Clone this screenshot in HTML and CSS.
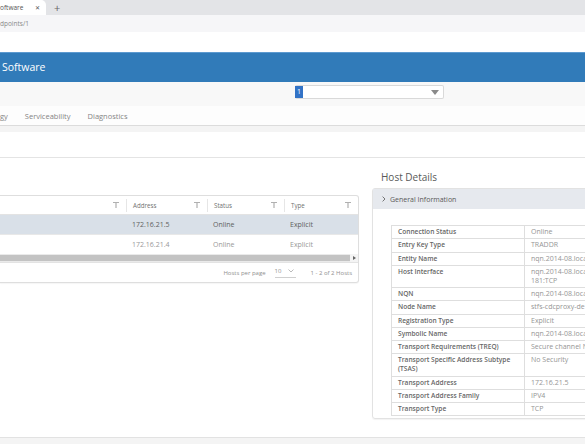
FILE: index.html
```html
<!DOCTYPE html>
<html lang="en">
<head>
    <meta charset="UTF-8">
    <title>Hosts</title>
    <link rel="stylesheet" href="styles.css">
</head>
<body>
    <!-- Browser chrome -->
    <div class="tab-strip">
        <div class="tab active">
            <span class="tab-title">oftware</span>
            <span class="tab-close">✕</span>
        </div>
        <span class="tab-new">+</span>
    </div>
    <div class="address-bar">dpoints/1</div>
    <div class="page-gap"></div>

    <!-- App header -->
    <div class="app-header">Software</div>
    <div class="sub-bar">
        <div class="select-box">
            <span class="select-value">1</span>
            <svg class="select-caret" width="8" height="5" viewBox="0 0 8 5"><path d="M0 0H8L4 5Z" fill="#8a8a8a"/></svg>
        </div>
    </div>
    <div class="nav-tabs">
        <span class="nav-tab">gy</span>
        <span class="nav-tab">Serviceability</span>
        <span class="nav-tab">Diagnostics</span>
    </div>
    <div class="nav-shadow"></div>
    <div class="page-title-row"></div>

    <!-- Main content -->
    <div class="content">
        <div class="left-col">
            <div class="datagrid">
                <div class="dg-row dg-head">
                    <div class="dg-cell c1"><svg class="filter" width="6" height="6" viewBox="0 0 6 6"><path d="M0 0H6V1H3.6V6H2.4V1H0Z" fill="#b0b0b0"/></svg></div>
                    <div class="dg-cell c2">Address<svg class="filter" width="6" height="6" viewBox="0 0 6 6"><path d="M0 0H6V1H3.6V6H2.4V1H0Z" fill="#b0b0b0"/></svg></div>
                    <div class="dg-cell c3">Status<svg class="filter" width="6" height="6" viewBox="0 0 6 6"><path d="M0 0H6V1H3.6V6H2.4V1H0Z" fill="#b0b0b0"/></svg></div>
                    <div class="dg-cell c4">Type<svg class="filter" width="6" height="6" viewBox="0 0 6 6"><path d="M0 0H6V1H3.6V6H2.4V1H0Z" fill="#b0b0b0"/></svg></div>
                </div>
                <div class="dg-row dg-selected">
                    <div class="dg-cell c1"></div>
                    <div class="dg-cell c2">172.16.21.5</div>
                    <div class="dg-cell c3">Online</div>
                    <div class="dg-cell c4">Explicit</div>
                </div>
                <div class="dg-row dg-plain">
                    <div class="dg-cell c1"></div>
                    <div class="dg-cell c2">172.16.21.4</div>
                    <div class="dg-cell c3">Online</div>
                    <div class="dg-cell c4">Explicit</div>
                </div>
                <div class="dg-scroll">
                    <div class="scroll-track"></div>
                    <div class="scroll-arrow"><svg width="3" height="4" viewBox="0 0 3 4"><path d="M0 0L3 2L0 4Z" fill="#666"/></svg></div>
                </div>
                <div class="dg-footer">
                    <span class="per-page">Hosts per page</span>
                    <span class="page-size">10<svg width="6" height="4" viewBox="0 0 6 4"><path d="M0.5 0.5L3 3L5.5 0.5" stroke="#aaa" fill="none" stroke-width="0.8"/></svg></span>
                    <span class="page-range">1 - 2 of 2 Hosts</span>
                </div>
            </div>
        </div>

        <div class="right-col">
            <h2 class="details-title">Host Details</h2>
            <div class="panel">
                <div class="panel-header">
                    <svg class="chevron" width="4" height="6" viewBox="0 0 4 6"><path d="M0.6 0.6L3 3L0.6 5.4" stroke="#666" fill="none" stroke-width="0.9"/></svg>
                    <span>General Information</span>
                </div>
                <div class="panel-body">
                    <table class="details">
                        <tr><th>Connection Status</th><td>Online</td></tr>
                        <tr><th>Entry Key Type</th><td>TRADDR</td></tr>
                        <tr><th>Entity Name</th><td>nqn.2014-08.loca</td></tr>
                        <tr><th>Host Interface</th><td>nqn.2014-08.loca<br>181:TCP</td></tr>
                        <tr><th>NQN</th><td>nqn.2014-08.loca</td></tr>
                        <tr><th>Node Name</th><td>stfs-cdcproxy-de</td></tr>
                        <tr><th>Registration Type</th><td>Explicit</td></tr>
                        <tr><th>Symbolic Name</th><td>nqn.2014-08.loca</td></tr>
                        <tr><th>Transport Requirements (TREQ)</th><td>Secure channel N</td></tr>
                        <tr><th>Transport Specific Address Subtype<br>(TSAS)</th><td>No Security</td></tr>
                        <tr><th>Transport Address</th><td>172.16.21.5</td></tr>
                        <tr><th>Transport Address Family</th><td>IPV4</td></tr>
                        <tr><th>Transport Type</th><td>TCP</td></tr>
                    </table>
                </div>
            </div>
        </div>
    </div>

    <div class="page-bottom"></div>
</body>
</html>
```

FILE: styles.css
```css
* {
    box-sizing: border-box;
    margin: 0;
    padding: 0;
}

body {
    width: 585px;
    height: 444px;
    overflow: hidden;
    font-family: 'Open Sans', sans-serif;
    background: white;
    color: #555;
}

/* Browser chrome */
.tab-strip {
    display: flex;
    align-items: center;
    height: 15px;
    background: #e3e4e7;
}

.tab {
    display: flex;
    align-items: center;
    justify-content: space-between;
    width: 46px;
    height: 15px;
    padding-right: 6px;
    background: white;
    border-top-right-radius: 5px;
    font-size: 6.5px;
    color: #555;
}

.tab-close {
    font-size: 6px;
    color: #555;
}

.tab-new {
    margin-left: 8px;
    font-size: 11px;
    color: #666;
    line-height: 15px;
}

.address-bar {
    height: 17px;
    line-height: 18px;
    background: #f6f6f8;
    font-size: 6.5px;
    color: #888;
}

.page-gap {
    height: 20px;
}

/* App header */
.app-header {
    height: 30px;
    padding-left: 2px;
    line-height: 29px;
    background: #317bb9;
    border-top: 1px solid #5d9ad0;
    color: white;
    font-size: 10.5px;
}

.sub-bar {
    height: 24px;
    padding: 3px 0 0 295px;
    background: #f8f8f8;
}

.select-box {
    display: flex;
    align-items: center;
    justify-content: space-between;
    width: 149px;
    height: 14px;
    padding-right: 4px;
    background: white;
    border: 1px solid #d9d9d9;
    border-left: none;
    border-radius: 2px;
}

.select-value {
    height: 12px;
    padding: 0 2px;
    line-height: 12px;
    background: #3273c6;
    color: white;
    font-size: 7px;
}

.nav-tabs {
    display: flex;
    gap: 17px;
    height: 20px;
    align-items: center;
    background: #fdfdfd;
    border-bottom: 1px solid #dcdcdc;
}

.nav-tab {
    font-size: 7.5px;
    color: #858585;
}

.nav-shadow {
    height: 6px;
    background: #f4f4f4;
}

.page-title-row {
    height: 26px;
    border-bottom: 1px solid #e4e4e4;
}

/* Main content */
.content {
    display: flex;
    height: 279px;
}

.left-col {
    width: 359px;
    padding-top: 37px;
}

.datagrid {
    border: 1px solid #dedede;
    border-left: none;
    border-radius: 0 3px 3px 0;
    box-shadow: 0 1px 1px rgba(0,0,0,0.04);
}

.dg-row {
    display: flex;
    height: 19px;
    align-items: center;
    font-size: 7px;
}

.dg-head {
    height: 19px;
    font-size: 6.2px;
    color: #707070;
    border-bottom: 1px solid #e3e3e3;
}

.dg-cell {
    display: flex;
    align-items: center;
    justify-content: space-between;
    height: 100%;
    padding: 0 7px 0 6px;
}

.dg-head .dg-cell + .dg-cell {
    border-left: 1px solid #e6e6e6;
}

.dg-head .c1 {
    justify-content: flex-end;
}

.c1 { width: 126px; }
.c2 { width: 81px; }
.c3 { width: 77px; }
.c4 { width: 74px; }

.dg-head .dg-cell {
    height: 13px;
}

.dg-selected {
    height: 20px;
    background: #d9e0e8;
    color: #606060;
    border-bottom: 1px solid #e8e8e8;
}

.dg-plain {
    height: 19px;
    color: #999;
}

.dg-scroll {
    display: flex;
    height: 8px;
    background: #eaeaea;
}

.scroll-track {
    flex: 1;
    margin: 1px 0;
    background: #c3c3c3;
}

.scroll-arrow {
    display: flex;
    align-items: center;
    justify-content: center;
    width: 8px;
    background: #f4f4f4;
}

.dg-footer {
    display: flex;
    align-items: center;
    justify-content: flex-end;
    height: 20px;
    padding-right: 6px;
    font-size: 6px;
    color: #8f8f8f;
    border-top: 1px solid #e3e3e3;
}

.page-size {
    display: flex;
    align-items: center;
    gap: 7px;
    margin: 0 14px 0 9px;
    padding: 0 2px 2px 0;
    border-bottom: 1px solid #cfcfcf;
}

/* Host details */
.right-col {
    flex: 1;
    padding: 13px 0 0 13px;
}

.details-title {
    padding-left: 9px;
    font-size: 10px;
    font-weight: normal;
    color: #595959;
    line-height: 12px;
}

.panel {
    margin-top: 5px;
    width: 240px;
    border: 1px solid #e2e2e2;
    border-radius: 3px;
    box-shadow: 0 1px 1px rgba(0,0,0,0.05);
}

.panel-header {
    display: flex;
    align-items: center;
    gap: 4px;
    height: 20px;
    padding-left: 9px;
    background: #e6e9ee;
    font-size: 7px;
    color: #595959;
}

.panel-body {
    padding: 16px 0 2px 18px;
}

.details {
    width: 230px;
    border-collapse: collapse;
}

.details th,
.details td {
    padding: 2px 6px 1.5px;
    border: 1px solid #dedede;
    text-align: left;
    vertical-align: top;
    line-height: 8.8px;
    white-space: nowrap;
}

.details th {
    width: 133px;
    font-size: 6.6px;
    font-weight: 600;
    color: #666;
}

.details td {
    font-size: 7px;
    color: #959595;
}

.page-bottom {
    height: 7px;
    background: #f4f4f4;
    border-top: 1px solid #e2e2e2;
}
```
